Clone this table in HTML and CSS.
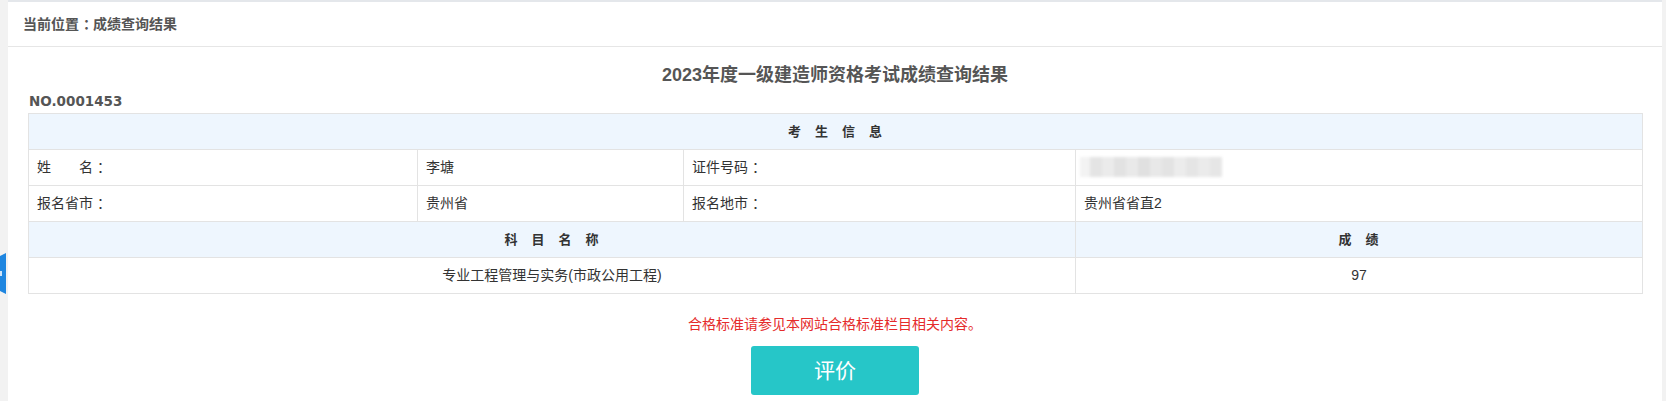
FILE: index.html
```html
<!DOCTYPE html>
<html lang="zh-CN">
<head>
<meta charset="utf-8">
<title>成绩查询结果</title>
<link rel="stylesheet" href="styles.css">
</head>
<body>
<div class="side-tab"><span class="side-mark"></span></div>
<div class="panel">
  <div class="crumb">当前位置<span class="colon">：</span>成绩查询结果</div>
  <div class="content">
    <h1 class="title">2023年度一级建造师资格考试成绩查询结果</h1>
    <div class="serial">NO.0001453</div>
    <table class="result">
      <colgroup>
        <col class="c1"><col class="c2"><col class="c3"><col class="c4">
      </colgroup>
      <tr class="head"><th colspan="4"><span class="spaced">考生信息</span></th></tr>
      <tr>
        <td>姓　　名<span class="colon">：</span></td>
        <td>李塘</td>
        <td>证件号码<span class="colon">：</span></td>
        <td><span class="redacted"></span></td>
      </tr>
      <tr>
        <td>报名省市<span class="colon">：</span></td>
        <td>贵州省</td>
        <td>报名地市<span class="colon">：</span></td>
        <td>贵州省省直2</td>
      </tr>
      <tr class="head">
        <th colspan="3"><span class="spaced">科目名称</span></th>
        <th><span class="spaced">成绩</span></th>
      </tr>
      <tr class="center">
        <td colspan="3">专业工程管理与实务(市政公用工程)</td>
        <td>97</td>
      </tr>
    </table>
    <p class="note">合格标准请参见本网站合格标准栏目相关内容。</p>
    <div class="actions"><a class="btn" href="#">评价</a></div>
  </div>
</div>
</body>
</html>
```
FILE: styles.css
```css
html, body {
  margin: 0;
  padding: 0;
}
body {
  background: #f2f2f2;
  font-family: "Liberation Sans", "Noto Sans CJK SC", sans-serif;
  color: #333;
  padding: 0 4px 0 8px;
  height: 401px;
  overflow: hidden;
}
.side-tab {
  position: absolute;
  left: 0;
  top: 253px;
  width: 6px;
  height: 41px;
  background: #1f86e0;
  clip-path: polygon(0 3px, 6px 0, 6px 41px, 0 38px);
}
.side-mark {
  position: absolute;
  left: 0;
  top: 18px;
  width: 2px;
  height: 5px;
  background: #cfe4f8;
}
.panel {
  background: #fff;
  border-top: 2px solid #e4e7eb;
  height: 399px;
}
.colon {
  padding-left: 4px;
  letter-spacing: -4px;
}
.crumb {
  height: 44px;
  line-height: 44px;
  border-bottom: 1px solid #e6e6e6;
  padding-left: 15px;
  font-size: 14px;
  font-weight: bold;
  color: #555;
}
.content {
  padding: 16px 20px 0;
}
.title {
  margin: 0;
  text-align: center;
  font-size: 18px;
  line-height: 24px;
  font-weight: bold;
  color: #555;
}
.serial {
  margin-top: 4px;
  line-height: 20px;
  font-family: "DejaVu Sans", sans-serif;
  font-weight: bold;
  font-size: 13.5px;
  color: #555;
  padding-left: 1px;
}
.result {
  margin-top: 2px;
  width: 1614px;
  border-collapse: collapse;
  table-layout: fixed;
  font-size: 14px;
}
.c1 { width: 389px; }
.c2 { width: 266px; }
.c3 { width: 392px; }
.c4 { width: 567px; }
.result td, .result th {
  border: 1px solid #e3e3e3;
  height: 35px;
  line-height: 35px;
  padding: 0 0 0 8px;
  text-align: left;
  font-weight: normal;
  white-space: nowrap;
  color: #333;
}
.result tr.head th {
  background: #eef6fe;
  text-align: center;
  font-weight: bold;
  font-size: 13px;
  padding-left: 13px;
}
.spaced {
  letter-spacing: 14px;
}
.result tr.center td {
  text-align: center;
  padding-left: 0;
}
.redacted {
  display: inline-block;
  vertical-align: middle;
  width: 142px;
  height: 20px;
  margin-left: -4px;
  margin-top: -2px;
  background:
    linear-gradient(90deg, #f3f3f3 0 10px, #e4e4e4 10px 22px, #ebebeb 22px 34px, #e2e2e2 34px 46px, #e9e9e9 46px 58px, #e0e0e0 58px 70px, #e8e8e8 70px 82px, #e3e3e3 82px 94px, #ececec 94px 106px, #e5e5e5 106px 118px, #ebebeb 118px 130px, #e6e6e6 130px 142px);
  filter: blur(1.5px);
}
.note {
  margin: 20px 0 0;
  text-align: center;
  font-size: 14px;
  line-height: 20px;
  color: #e52b2b;
}
.actions {
  margin-top: 12px;
  display: flex;
  justify-content: center;
}
.btn {
  display: block;
  width: 168px;
  height: 49px;
  line-height: 49px;
  text-align: center;
  background: #26c6c8;
  color: #fff;
  font-size: 21px;
  text-decoration: none;
  border-radius: 3px;
}
```
